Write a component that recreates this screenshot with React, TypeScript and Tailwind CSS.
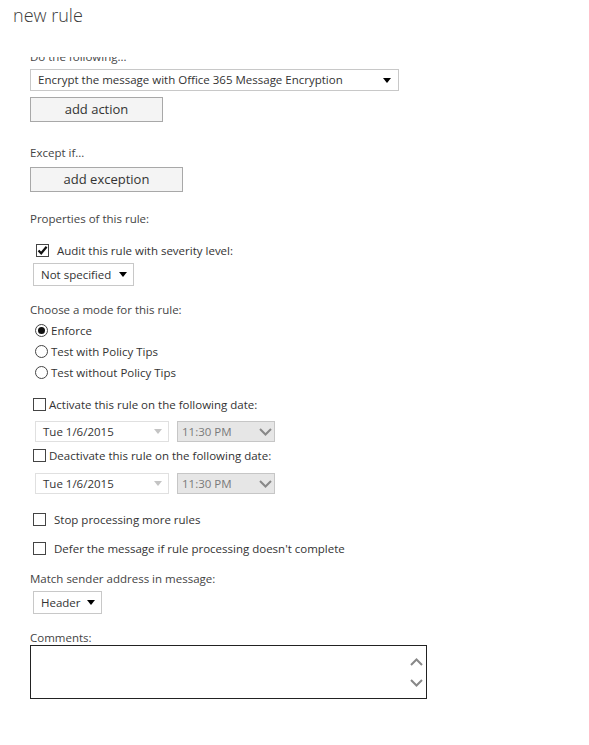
import React from 'react';

function Caret({ color = '#000' }: { color?: string }) {
  return (
    <svg width="8" height="5" viewBox="0 0 8 5">
      <path d="M0 0 H8 L4 5 Z" fill={color} />
    </svg>
  );
}

function Chevron({ up = false }: { up?: boolean }) {
  return (
    <svg width="13" height="8" viewBox="0 0 13 8">
      <path d={up ? 'M1 7 L6.5 1.5 L12 7' : 'M1 1 L6.5 6.5 L12 1'} fill="none" stroke="#888" strokeWidth="2" />
    </svg>
  );
}

function Checkbox({ checked = false }: { checked?: boolean }) {
  return (
    <span className="w-[13px] h-[13px] border border-[#444] bg-white flex items-center justify-center shrink-0">
      {checked && (
        <svg width="11" height="11" viewBox="0 0 11 11">
          <path d="M1.5 5.5 L4.2 8.3 L9.6 1.8" fill="none" stroke="#111" strokeWidth="2.2" />
        </svg>
      )}
    </span>
  );
}

function Radio({ checked = false }: { checked?: boolean }) {
  return (
    <span className="w-[13px] h-[13px] rounded-full border border-[#444] bg-white flex items-center justify-center shrink-0">
      {checked && <span className="w-[7px] h-[7px] rounded-full bg-[#111]" />}
    </span>
  );
}

function DateRow() {
  return (
    <div className="flex gap-[8px] pl-[5px] h-[21px]">
      <div className="w-[134px] h-[21px] border border-[#e0e0e0] flex items-center justify-between pl-[7px] pr-[6px]">
        <span>Tue 1/6/2015</span>
        <Caret color="#c4c4c4" />
      </div>
      <div className="w-[98px] h-[21px] border border-[#c6c6c6] bg-[#e6e6e6] text-[#7a7a7a] flex items-center justify-between pl-[4px] pr-[2px]">
        <span>11:30 PM</span>
        <Chevron />
      </div>
    </div>
  );
}

export default function App() {
  return (
    <div className="w-[589px] h-[745px] bg-white text-[#333] text-[11.5px] font-['Open_Sans','Noto_Sans',sans-serif]">
      <h1 className="h-[57px] pl-[13px] pt-[3px] text-[18px] font-light text-[#3a3a3a] leading-[24px]">new rule</h1>
      <div className="overflow-hidden pl-[30px]">
        <div className="-mt-[8px] flex flex-col">
          <div className="leading-[16px] text-[#444]">Do the following...</div>
          <div className="mt-[4px] w-[369px] h-[22px] border border-[#c8c8c8] flex items-center justify-between pl-[7px] pr-[7px]">
            <span>Encrypt the message with Office 365 Message Encryption</span>
            <Caret />
          </div>
          <button className="mt-[6px] w-[133px] h-[25px] bg-[#f4f4f4] border border-[#a8a8a8] text-[13px] text-[#333]">add action</button>

          <div className="mt-[23px] leading-[16px] text-[#444]">Except if...</div>
          <button className="mt-[6px] w-[153px] h-[25px] bg-[#f4f4f4] border border-[#a8a8a8] text-[13px] text-[#333]">add exception</button>

          <div className="mt-[19px] leading-[16px] text-[#444]">Properties of this rule:</div>
          <div className="mt-[15px] h-[17px] flex items-center pl-[6px] gap-[8px]">
            <Checkbox checked />
            <span>Audit this rule with severity level:</span>
          </div>
          <div className="ml-[3px] mt-[4px] w-[101px] h-[23px] border border-[#c8c8c8] flex items-center justify-between pl-[7px] pr-[6px]">
            <span>Not specified</span>
            <Caret />
          </div>

          <div className="mt-[16px] leading-[16px] text-[#444]">Choose a mode for this rule:</div>
          <div className="mt-[2px] flex flex-col">
            <div className="h-[21px] flex items-center pl-[5px] gap-[3px]">
              <Radio checked />
              <span>Enforce</span>
            </div>
            <div className="h-[21px] flex items-center pl-[5px] gap-[3px]">
              <Radio />
              <span>Test with Policy Tips</span>
            </div>
            <div className="h-[21px] flex items-center pl-[5px] gap-[3px]">
              <Radio />
              <span>Test without Policy Tips</span>
            </div>
          </div>

          <div className="mt-[13px] h-[17px] flex items-center pl-[3px] gap-[3px]">
            <Checkbox />
            <span>Activate this rule on the following date:</span>
          </div>
          <div className="mt-[8px]">
            <DateRow />
          </div>
          <div className="mt-[5px] h-[17px] flex items-center pl-[3px] gap-[3px]">
            <Checkbox />
            <span>Deactivate this rule on the following date:</span>
          </div>
          <div className="mt-[9px]">
            <DateRow />
          </div>

          <div className="mt-[17px] h-[17px] flex items-center pl-[3px] gap-[8px]">
            <Checkbox />
            <span>Stop processing more rules</span>
          </div>
          <div className="mt-[12px] h-[17px] flex items-center pl-[3px] gap-[8px]">
            <Checkbox />
            <span>Defer the message if rule processing doesn't complete</span>
          </div>

          <div className="mt-[14px] leading-[16px] text-[#444]">Match sender address in message:</div>
          <div className="ml-[3px] mt-[4px] w-[69px] h-[23px] border border-[#c8c8c8] flex items-center justify-between pl-[7px] pr-[6px]">
            <span>Header</span>
            <Caret />
          </div>

          <div className="mt-[17px] leading-[14px] text-[#444]">Comments:</div>
          <div className="w-[397px] h-[54px] border border-[#222] flex flex-col items-end justify-center gap-[13px] pr-[3px]">
            <Chevron up />
            <Chevron />
          </div>
        </div>
      </div>
    </div>
  );
}
